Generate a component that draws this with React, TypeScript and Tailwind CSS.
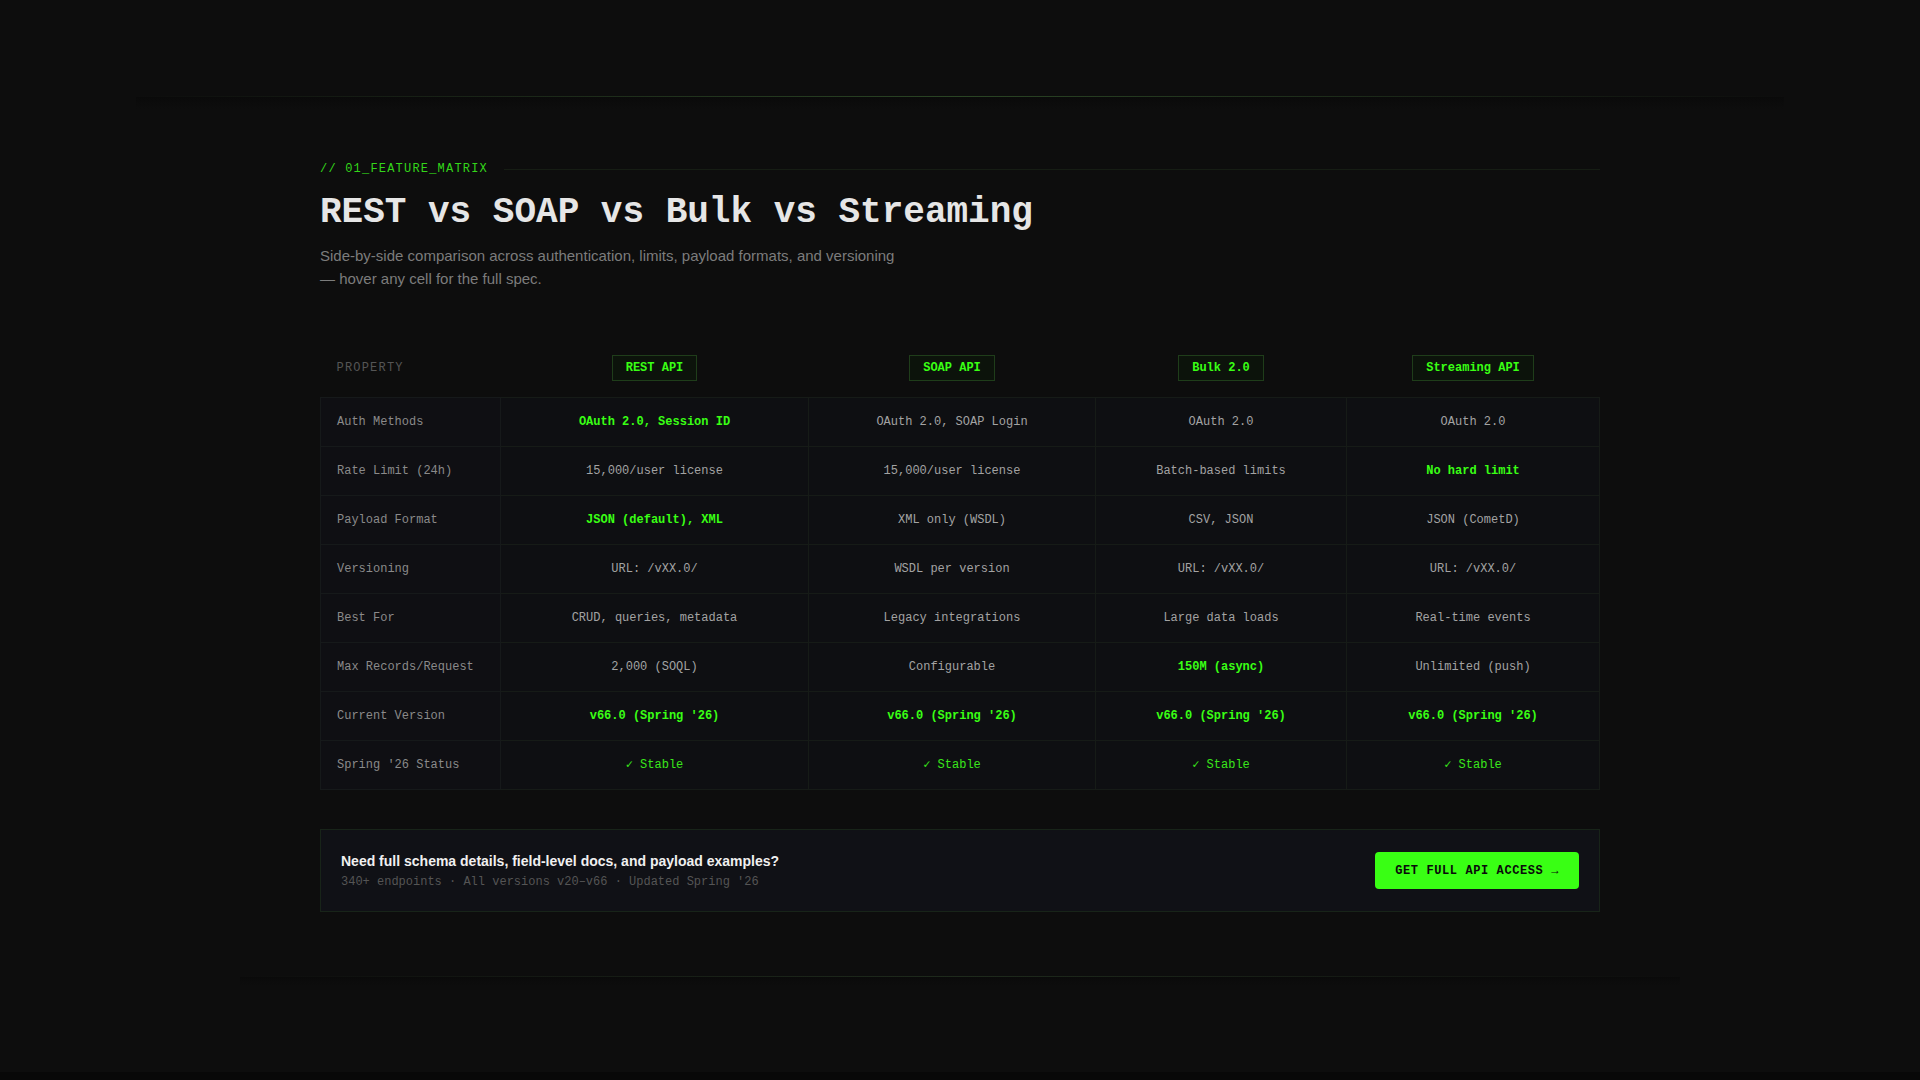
import React from "react";

type Cell = { text: string; hot?: boolean; ok?: boolean };

interface Row {
  label: string;
  cells: Cell[];
}

const apis = ["REST API", "SOAP API", "Bulk 2.0", "Streaming API"];
const colWidths = ["w-[308px]", "w-[287px]", "w-[251px]", "w-[253px]"];

const rows: Row[] = [
  {
    label: "Auth Methods",
    cells: [
      { text: "OAuth 2.0, Session ID", hot: true },
      { text: "OAuth 2.0, SOAP Login" },
      { text: "OAuth 2.0" },
      { text: "OAuth 2.0" },
    ],
  },
  {
    label: "Rate Limit (24h)",
    cells: [
      { text: "15,000/user license" },
      { text: "15,000/user license" },
      { text: "Batch-based limits" },
      { text: "No hard limit", hot: true },
    ],
  },
  {
    label: "Payload Format",
    cells: [
      { text: "JSON (default), XML", hot: true },
      { text: "XML only (WSDL)" },
      { text: "CSV, JSON" },
      { text: "JSON (CometD)" },
    ],
  },
  {
    label: "Versioning",
    cells: [
      { text: "URL: /vXX.0/" },
      { text: "WSDL per version" },
      { text: "URL: /vXX.0/" },
      { text: "URL: /vXX.0/" },
    ],
  },
  {
    label: "Best For",
    cells: [
      { text: "CRUD, queries, metadata" },
      { text: "Legacy integrations" },
      { text: "Large data loads" },
      { text: "Real-time events" },
    ],
  },
  {
    label: "Max Records/Request",
    cells: [
      { text: "2,000 (SOQL)" },
      { text: "Configurable" },
      { text: "150M (async)", hot: true },
      { text: "Unlimited (push)" },
    ],
  },
  {
    label: "Current Version",
    cells: [
      { text: "v66.0 (Spring '26)", hot: true },
      { text: "v66.0 (Spring '26)", hot: true },
      { text: "v66.0 (Spring '26)", hot: true },
      { text: "v66.0 (Spring '26)", hot: true },
    ],
  },
  {
    label: "Spring '26 Status",
    cells: [
      { text: "✓ Stable", ok: true },
      { text: "✓ Stable", ok: true },
      { text: "✓ Stable", ok: true },
      { text: "✓ Stable", ok: true },
    ],
  },
];

const mono = "font-['Liberation_Mono',_'DejaVu_Sans_Mono',_monospace]";
const sans = "font-['Liberation_Sans',_Arial,_sans-serif]";

export default function App() {
  return (
    <div className="min-h-screen bg-[#080808]">
      <div className={`min-h-[1072px] bg-[#0d0d0d] ${mono}`}>
        {/* top rule */}
        <div className="h-24" />
        <div className="mx-auto w-[1648px]">
          <div className="h-px bg-gradient-to-r from-transparent via-[#2a4424] to-transparent" />
          <div className="h-3 bg-gradient-to-b from-[#0a0a0a] to-transparent" />
        </div>

        <section className="mx-auto w-[1280px] pt-[52px]">
          {/* section label */}
          <div className="flex items-center gap-4">
            <span className="text-xs tracking-widest text-[#33d61a]">// 01_FEATURE_MATRIX</span>
            <div className="h-px flex-1 bg-[#161d14]" />
          </div>

          <h2 className="mt-[13px] text-4xl font-bold leading-tight text-[#e6e6e6]">
            REST vs SOAP vs Bulk vs Streaming
          </h2>
          <p className={`mt-[9px] max-w-xl text-[15px] leading-[23px] text-[#7c7c7c] ${sans}`}>
            Side-by-side comparison across authentication, limits, payload formats, and versioning
            — hover any cell for the full spec.
          </p>

          {/* matrix */}
          <table className="mt-[49px] w-full border-collapse text-xs">
            <thead>
              <tr>
                <th className="w-[180px] px-4 py-4 text-left font-normal uppercase tracking-widest text-[#555]">
                  Property
                </th>
                {apis.map((api, i) => (
                  <th key={api} className={`${colWidths[i]} py-4 font-normal`}>
                    <span className="inline-block border border-[#1f3d1a] bg-[#0c130b] px-[13px] py-[4px] font-bold text-[#39ff14]">
                      {api}
                    </span>
                  </th>
                ))}
              </tr>
            </thead>
            <tbody>
              {rows.map((row) => (
                <tr key={row.label}>
                  <td className="border border-[#16191a] bg-[#0f0f13] px-4 py-4 text-[#8a8a8a]">
                    {row.label}
                  </td>
                  {row.cells.map((c, i) => (
                    <td
                      key={i}
                      className={`border border-[#161b17] bg-[#0e0f12] py-4 text-center ${
                        c.hot
                          ? "font-bold text-[#39ff14]"
                          : c.ok
                          ? "text-[#39e61a]"
                          : "text-[#a3a3a3]"
                      }`}
                    >
                      {c.text}
                    </td>
                  ))}
                </tr>
              ))}
            </tbody>
          </table>

          {/* CTA */}
          <div className="mt-[39px] flex items-center justify-between border border-[#182419] bg-[#101116] px-5 py-[21px]">
            <div>
              <p className={`text-sm font-bold leading-5 text-[#f0f0f0] ${sans}`}>
                Need full schema details, field-level docs, and payload examples?
              </p>
              <p className="mt-[3px] text-xs text-[#555]">
                340+ endpoints · All versions v20–v66 · Updated Spring '26
              </p>
            </div>
            <button className="flex h-[37px] items-center rounded-sm bg-[#39ff14] px-5 text-xs font-bold tracking-wider text-[#0a0a0a]">
              GET FULL API ACCESS →
            </button>
          </div>
        </section>

        {/* bottom rule */}
        <div className="mx-auto mt-16 w-[1440px]">
          <div className="h-px bg-gradient-to-r from-transparent via-[#1e2a1c] to-transparent" />
          <div className="h-2 bg-gradient-to-b from-[#0a0a0a] to-transparent" />
        </div>
      </div>
    </div>
  );
}
